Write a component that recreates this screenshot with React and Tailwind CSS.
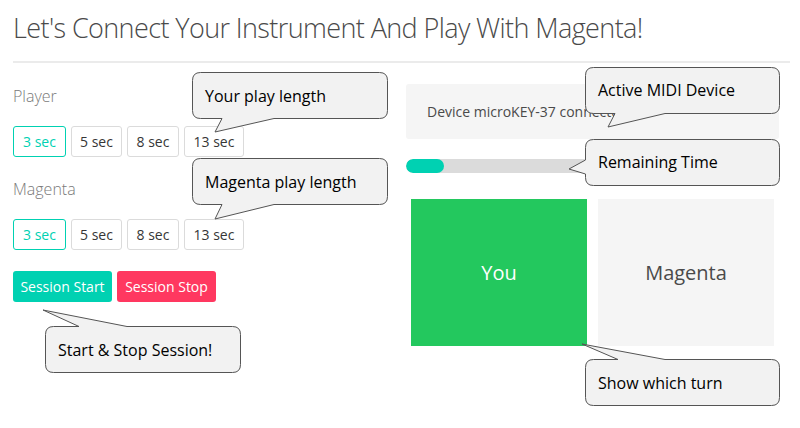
import React from "react";

const durations = ["3 sec", "5 sec", "8 sec", "13 sec"];
const widths = ["w-[53px]", "w-[51px]", "w-[52px]", "w-[60px]"];

function DurationRow() {
  return (
    <div className="flex gap-[5px]">
      {durations.map((d, i) => (
        <button
          key={d}
          className={`${widths[i]} h-[31px] rounded-[3px] border text-[14px] bg-white ${
            i === 0 ? "border-[#00d1b2] text-[#00d1b2]" : "border-[#dbdbdb] text-[#363636]"
          }`}
        >
          {d}
        </button>
      ))}
    </div>
  );
}

// speech bubble outlines, drawn over the page
const r = 8;
function bottomTail(x0, y0, x1, y1, b1, b2, tx, ty) {
  return `M${x0 + r},${y0} H${x1 - r} Q${x1},${y0} ${x1},${y0 + r} V${y1 - r} Q${x1},${y1} ${x1 - r},${y1} H${b2} L${tx},${ty} L${b1},${y1} H${x0 + r} Q${x0},${y1} ${x0},${y1 - r} V${y0 + r} Q${x0},${y0} ${x0 + r},${y0} Z`;
}
function topTail(x0, y0, x1, y1, b1, b2, tx, ty) {
  return `M${x0 + r},${y0} H${b1} L${tx},${ty} L${b2},${y0} H${x1 - r} Q${x1},${y0} ${x1},${y0 + r} V${y1 - r} Q${x1},${y1} ${x1 - r},${y1} H${x0 + r} Q${x0},${y1} ${x0},${y1 - r} V${y0 + r} Q${x0},${y0} ${x0 + r},${y0} Z`;
}
function leftTail(x0, y0, x1, y1, b1, b2, tx, ty) {
  return `M${x0 + r},${y0} H${x1 - r} Q${x1},${y0} ${x1},${y0 + r} V${y1 - r} Q${x1},${y1} ${x1 - r},${y1} H${x0 + r} Q${x0},${y1} ${x0},${y1 - r} V${b2} L${tx},${ty} L${x0},${b1} V${y0 + r} Q${x0},${y0} ${x0 + r},${y0} Z`;
}

const bubbles = [
  bottomTail(192.5, 72.5, 387.5, 118.5, 222, 274, 215, 132),
  bottomTail(192.5, 158.5, 387.5, 204.5, 222, 274, 215, 219),
  topTail(45.5, 326.5, 240.5, 372.5, 79, 127, 43, 310),
  bottomTail(585.5, 67.5, 779.5, 113.5, 615, 665, 608, 127),
  leftTail(585.5, 139.5, 779.5, 185.5, 160, 174, 569, 169),
  topTail(585.5, 359.5, 779.5, 405.5, 618, 665, 582, 344),
];

const labels = [
  { text: "Your play length", cls: "left-[205px] top-[84px]" },
  { text: "Magenta play length", cls: "left-[205px] top-[170px]" },
  { text: "Start & Stop Session!", cls: "left-[58px] top-[338px]" },
  { text: "Active MIDI Device", cls: "left-[598px] top-[78px]" },
  { text: "Remaining Time", cls: "left-[598px] top-[150px]" },
  { text: "Show which turn", cls: "left-[598px] top-[371px]" },
];

export default function App() {
  return (
    <div
      className="relative w-[800px] h-[428px] overflow-hidden bg-white px-[13px]"
      style={{ fontFamily: '"Open Sans", "Noto Sans", sans-serif' }}
    >
      <h1 className="pt-[8px] text-[27px] leading-[40px] font-light text-[#4a4a4a] tracking-[-0.6px]">
        Let's Connect Your Instrument And Play With Magenta!
      </h1>
      <div className="mt-[13px] mr-[-3px] h-[2px] bg-[#ebebeb]" />

      <div className="flex mt-[21px]">
        <div className="w-[393px] flex flex-col">
          <div className="text-[16px] leading-[24px] font-light text-[#7a7a7a]">Player</div>
          <div className="mt-[18px]">
            <DurationRow />
          </div>
          <div className="mt-[20px] text-[16px] leading-[24px] font-light text-[#7a7a7a]">Magenta</div>
          <div className="mt-[18px]">
            <DurationRow />
          </div>
          <div className="mt-[21px] flex gap-[5px]">
            <button className="w-[99px] h-[31px] rounded-[3px] bg-[#00d1b2] text-white text-[14px]">
              Session Start
            </button>
            <button className="w-[99px] h-[31px] rounded-[3px] bg-[#ff3860] text-white text-[14px]">
              Session Stop
            </button>
          </div>
        </div>

        <div className="w-[373px] flex flex-col">
          <div className="h-[55px] rounded-[3px] bg-[#f5f5f5] flex items-center pl-[21px] text-[14px] text-[#4a4a4a]">
            Device microKEY-37 connected
          </div>
          <div className="mt-[20px] h-[14px] rounded-full bg-[#dbdbdb] overflow-hidden">
            <div className="h-full w-[38px] rounded-full bg-[#00d1b2]" />
          </div>
          <div className="mt-[26px] ml-[5px] flex gap-[11px]">
            <div className="w-[176px] h-[147px] bg-[#23c85e] flex items-center justify-center text-white text-[20px]">
              You
            </div>
            <div className="w-[176px] h-[147px] bg-[#f5f5f5] flex items-center justify-center text-[#4a4a4a] text-[20px]">
              Magenta
            </div>
          </div>
        </div>
      </div>

      <svg className="absolute left-0 top-0 pointer-events-none" width="800" height="428">
        {bubbles.map((d, i) => (
          <path key={i} d={d} fill="#f2f2f2" stroke="#555" strokeWidth="1" />
        ))}
      </svg>
      {labels.map((l) => (
        <div
          key={l.text}
          className={`absolute ${l.cls} text-[16px] leading-[24px] text-black whitespace-nowrap`}
        >
          {l.text}
        </div>
      ))}
    </div>
  );
}
